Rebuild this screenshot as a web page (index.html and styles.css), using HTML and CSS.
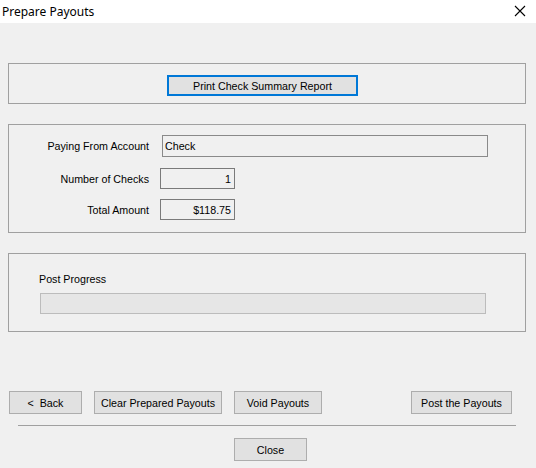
FILE: index.html
```html
<!DOCTYPE html>
<html>
<head>
<meta charset="utf-8">
<link rel="stylesheet" href="styles.css">
</head>
<body>
<div class="window">
  <div class="titlebar">
    <span class="title">Prepare Payouts</span>
    <svg class="close-x" width="12" height="12" viewBox="0 0 12 12"><path d="M1 1 L11 11 M11 1 L1 11" stroke="#000" stroke-width="1.1" fill="none"/></svg>
  </div>
  <div class="content">
    <div class="group g1">
      <button class="btn btn-print">Print Check Summary Report</button>
    </div>
    <div class="group g2">
      <div class="row r1">
        <span class="label">Paying From Account</span>
        <div class="field f-wide">Check</div>
      </div>
      <div class="row r2">
        <span class="label">Number of Checks</span>
        <div class="field f-num">1</div>
      </div>
      <div class="row r3">
        <span class="label">Total Amount</span>
        <div class="field f-num">$118.75</div>
      </div>
    </div>
    <div class="group g3">
      <div class="plabel">Post Progress</div>
      <div class="progress"></div>
    </div>
    <div class="actions">
      <button class="btn b-back">&lt;&nbsp; Back</button>
      <button class="btn b-clear">Clear Prepared Payouts</button>
      <button class="btn b-void">Void Payouts</button>
      <button class="btn b-post">Post the Payouts</button>
    </div>
    <div class="sep"></div>
    <div class="closerow">
      <button class="btn b-close">Close</button>
    </div>
  </div>
</div>
</body>
</html>
```
FILE: styles.css
```css
* { box-sizing: border-box; }
html, body { margin: 0; padding: 0; }
body {
  background: #f0f0f0;
  font-family: "Liberation Sans", Arial, sans-serif;
  font-size: 10.7px;
  color: #000;
  width: 536px;
  height: 468px;
  overflow: hidden;
}
.window { width: 536px; height: 468px; }
.titlebar {
  height: 23px;
  background: #fff;
  display: flex;
  align-items: center;
  justify-content: space-between;
  padding: 0 10px 1px 2px;
}
.title {
  font-family: "Noto Sans", "Open Sans", sans-serif;
  font-size: 12px;
  color: #000;
}
.close-x { display: block; margin-right: 0; }
.content { padding: 0 10px 0 8px; }
.group {
  border: 1px solid #a0a0a0;
  width: 518px;
}
.g1 {
  margin-top: 40px;
  height: 41px;
  padding: 11px 0 0 158px;
}
.btn {
  font-family: "Liberation Sans", Arial, sans-serif;
  font-size: 10.7px;
  color: #000;
  background: #e1e1e1;
  border: 1px solid #adadad;
  padding: 0;
  margin: 0;
  height: 23px;
  display: flex;
  align-items: center;
  justify-content: center;
}
.btn-print {
  width: 191px;
  height: 21px;
  border: 2px solid #0078d7;
}
.g2 {
  margin-top: 20px;
  height: 109px;
  padding-top: 10px;
  display: flex;
  flex-direction: column;
}
.row { display: flex; align-items: center; }
.label {
  width: 140px;
  text-align: right;
}
.r1 .label { margin-right: 13px; }
.r2, .r3 { margin-top: 11px; }
.r3 { margin-top: 10px; }
.r2 .label, .r3 .label { margin-right: 11px; }
.field {
  border: 1px solid #7a7a7a;
  background: #f0f0f0;
  height: 21px;
  display: flex;
  align-items: center;
}
.f-wide {
  width: 326px;
  height: 22px;
  padding-left: 2px;
  border-color: #8a8a8a;
}
.f-num {
  width: 75px;
  justify-content: flex-end;
  padding-right: 3px;
  border-color: #7a7a7a;
}
.g3 {
  margin-top: 20px;
  height: 79px;
  padding: 18px 0 0 30px;
}
.plabel { height: 14px; line-height: 14px; }
.progress {
  margin-top: 7px;
  margin-left: 1px;
  width: 446px;
  height: 21px;
  background: #e6e6e6;
  border: 1px solid #bcbcbc;
}
.actions {
  margin-top: 59px;
  display: flex;
  padding-left: 1px;
}
.b-back { width: 73px; }
.b-clear { width: 128px; margin-left: 12px; }
.b-void { width: 88px; margin-left: 12px; }
.b-post { width: 101px; margin-left: 89px; }
.sep {
  margin: 11px 0 0 10px;
  width: 498px;
  height: 1px;
  background: #a0a0a0;
}
.closerow {
  margin-top: 12px;
  padding-left: 226px;
}
.b-close { width: 73px; }
```
